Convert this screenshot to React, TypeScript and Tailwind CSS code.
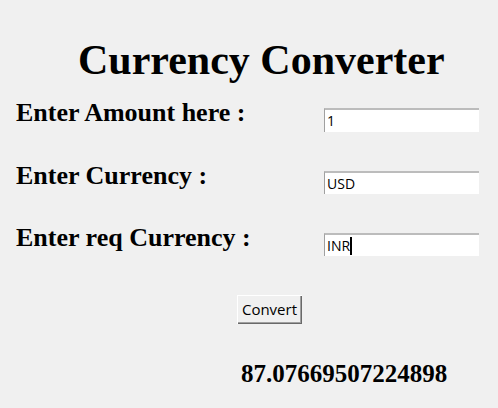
const serif = "font-['Liberation_Serif','Times_New_Roman',serif] font-bold text-black"
const ui = "font-['Open_Sans','Noto_Sans',sans-serif] text-black"

type Row = { label: string; value: string; top: string; h: string; caret?: boolean }

const rows: Row[] = [
  { label: "Enter Amount here :", value: "1", top: "mt-[19px]", h: "h-[24px]" },
  { label: "Enter Currency :", value: "USD", top: "mt-[31px]", h: "h-[23px]" },
  { label: "Enter req Currency :", value: "INR", top: "mt-[31px]", h: "h-[23px]", caret: true },
]

function Entry({ value, h, caret }: { value: string; h: string; caret?: boolean }) {
  return (
    <div
      className={`mt-[8px] w-[155px] ${h} bg-white border-t-2 border-t-[#bcbcbc] border-l border-l-[#a0a0a0] flex items-center pl-[2px]`}
    >
      <span className={`${ui} text-[14px] leading-none`}>{value}</span>
      {caret && <span className="w-[2px] h-[18px] bg-black" />}
    </div>
  )
}

export default function App() {
  return (
    <div className="w-[498px] h-[408px] bg-[#f0f0f0] overflow-hidden">
      {/* heading */}
      <h1 className={`${serif} text-[42px] leading-[42px] pt-[39px] pl-[78px] whitespace-nowrap`}>
        Currency Converter
      </h1>

      {/* form rows */}
      {rows.map((row) => (
        <div key={row.label} className={`${row.top} flex items-start`}>
          <div className={`${serif} w-[324px] pl-[16px] text-[26px] leading-[26px] whitespace-nowrap`}>
            {row.label}
          </div>
          <Entry value={row.value} h={row.h} caret={row.caret} />
        </div>
      ))}

      <div className="mt-[39px] pl-[237px]">
        <button
          className={`${ui} w-[65px] h-[29px] text-[15px] bg-[#f0f0f0] shadow-[inset_1px_1px_#ffffff,inset_-1px_-1px_#696969,inset_-2px_-2px_#a0a0a0] flex items-center justify-center`}
        >
          Convert
        </button>
      </div>

      <div className={`${serif} mt-[37px] pl-[241px] text-[25px] leading-[25px]`}>87.07669507224898</div>
    </div>
  )
}
